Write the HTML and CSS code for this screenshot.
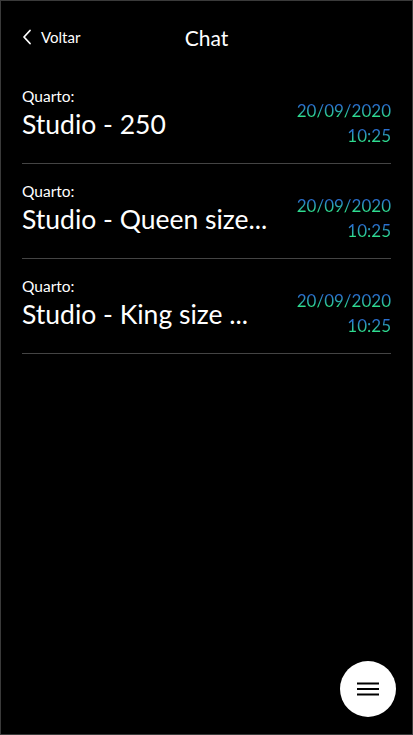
FILE: index.html
```html
<!DOCTYPE html>
<html lang="pt">
<head>
<meta charset="utf-8">
<title>Chat</title>
<link rel="stylesheet" href="styles.css">
</head>
<body>
<div class="screen">
  <header class="topbar">
    <a class="back" href="#">
      <svg class="chev" width="10" height="16" viewBox="0 0 10 16"><path d="M8 1.5 L2 8 L8 14.5" fill="none" stroke="#fff" stroke-width="1.8" stroke-linecap="round" stroke-linejoin="round"/></svg>
      <span>Voltar</span>
    </a>
    <h1 class="title">Chat</h1>
  </header>
  <ul class="list">
    <li class="item">
      <div class="info">
        <div class="label">Quarto:</div>
        <div class="name">Studio - 250</div>
      </div>
      <div class="when">
        <span class="grad">20/09/2020</span>
        <span class="grad">10:25</span>
      </div>
    </li>
    <li class="item">
      <div class="info">
        <div class="label">Quarto:</div>
        <div class="name">Studio - Queen size...</div>
      </div>
      <div class="when">
        <span class="grad">20/09/2020</span>
        <span class="grad">10:25</span>
      </div>
    </li>
    <li class="item">
      <div class="info">
        <div class="label">Quarto:</div>
        <div class="name">Studio - King size ...</div>
      </div>
      <div class="when">
        <span class="grad">20/09/2020</span>
        <span class="grad">10:25</span>
      </div>
    </li>
  </ul>
  <button class="fab" aria-label="Menu">
    <svg width="22" height="14" viewBox="0 0 22 14"><path d="M0 1.5H22M0 7H22M0 12.5H22" stroke="#000" stroke-width="2"/></svg>
  </button>
</div>
</body>
</html>
```

FILE: styles.css
```css
* { box-sizing: border-box; }
html, body { margin: 0; padding: 0; background: #000; }
body {
  width: 413px;
  height: 735px;
  font-family: "Lato", "Noto Sans", sans-serif;
  color: #fff;
}
.screen {
  position: relative;
  width: 413px;
  height: 735px;
  border: 1.5px solid #3a3a3a;
  background: #000;
  padding: 0 21px;
}
.topbar {
  position: relative;
  height: 68px;
  display: flex;
  align-items: center;
  padding-top: 4px;
}
.back {
  display: flex;
  align-items: center;
  gap: 9px;
  color: #fff;
  text-decoration: none;
  font-size: 15px;
  padding-left: 0;
}
.title {
  position: absolute;
  left: 0;
  right: 0;
  top: 4px;
  bottom: 0;
  margin: 0;
  display: flex;
  align-items: center;
  justify-content: center;
  font-size: 21px;
  font-weight: 400;
  pointer-events: none;
}
.list {
  list-style: none;
  margin: 0;
  padding: 0;
}
.item {
  height: 95px;
  display: flex;
  justify-content: space-between;
  align-items: flex-start;
  padding-top: 17px;
  border-bottom: 1px solid #444;
}
.label {
  font-size: 15.5px;
  line-height: 20px;
}
.name {
  font-size: 26.5px;
  line-height: 32px;
  margin-top: 2px;
}
.when {
  display: flex;
  flex-direction: column;
  align-items: flex-end;
  padding-top: 12px;
  font-size: 17px;
  line-height: 25px;
}
.grad {
  background: linear-gradient(to bottom, #2a70cf 30%, #2ee08c 75%);
  -webkit-background-clip: text;
  background-clip: text;
  color: transparent;
}
.fab {
  position: absolute;
  right: 16px;
  bottom: 17px;
  width: 56px;
  height: 56px;
  border-radius: 50%;
  border: none;
  background: #fff;
  display: flex;
  align-items: center;
  justify-content: center;
  padding: 0;
}
```
